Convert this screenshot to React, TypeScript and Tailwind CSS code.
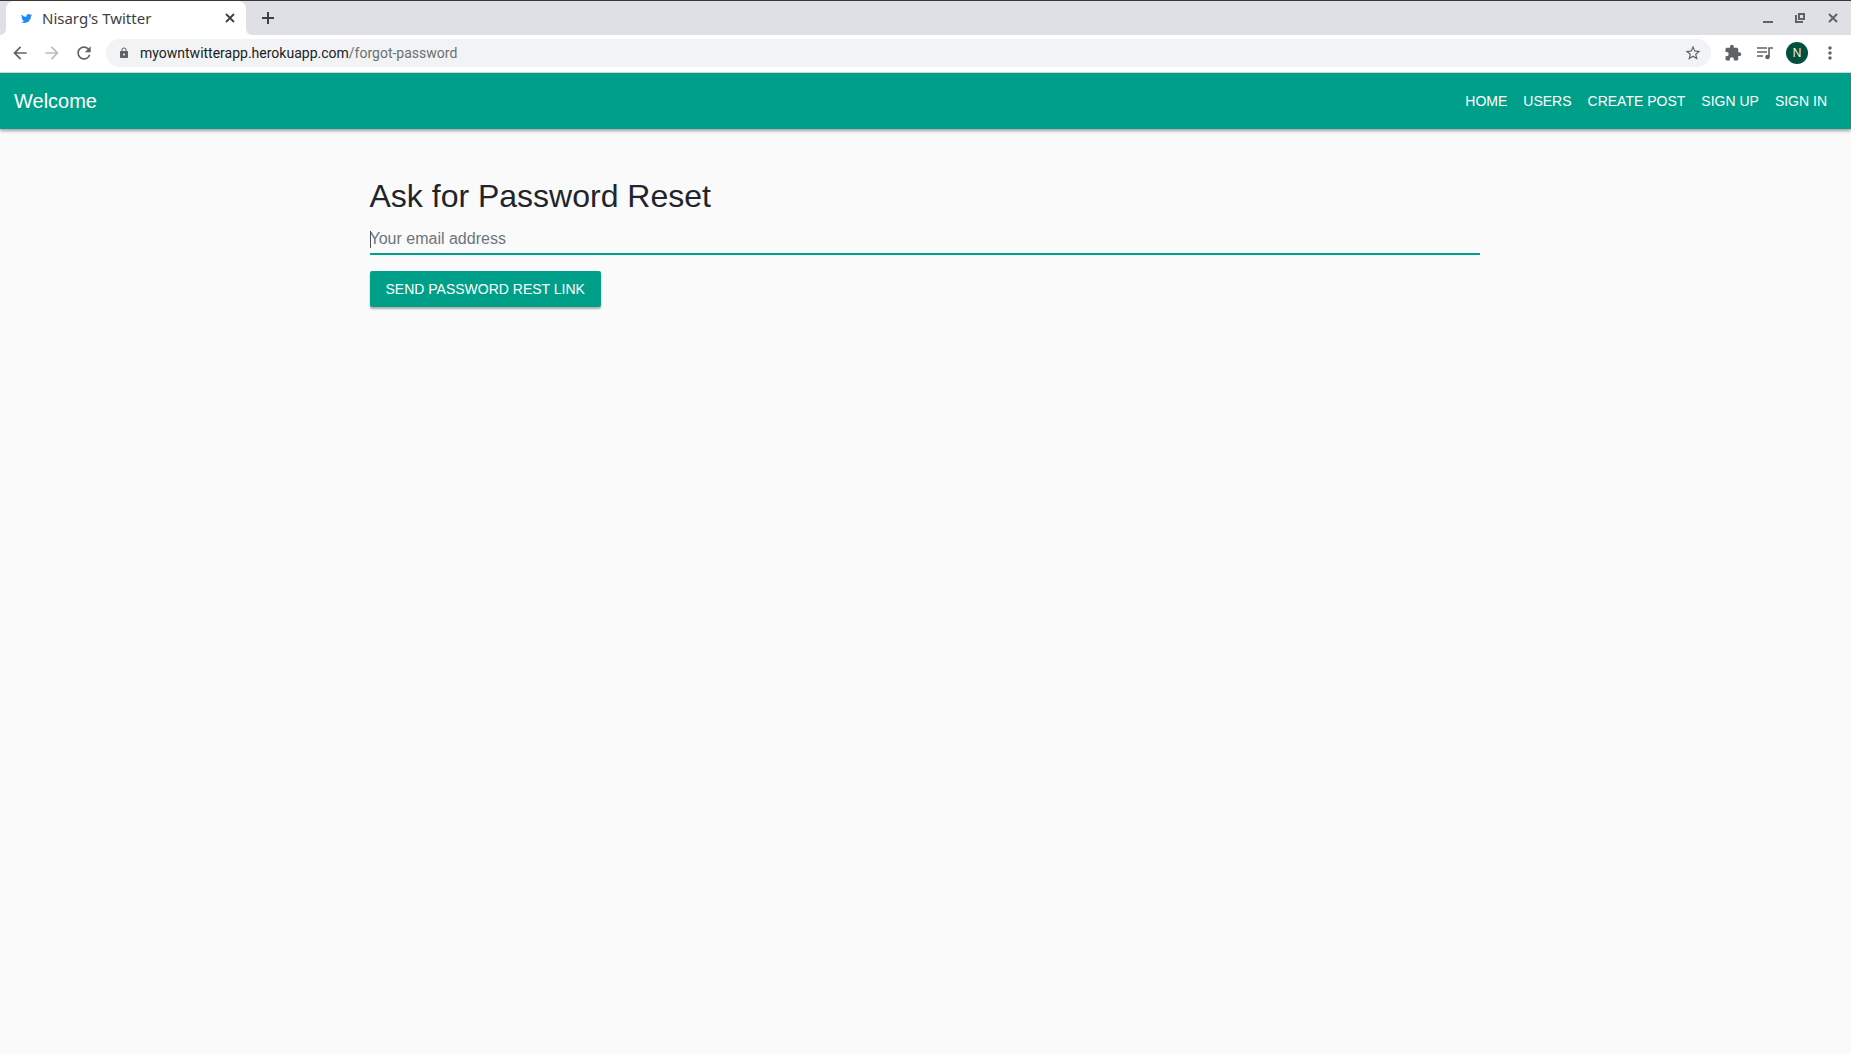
import {
  MdArrowBack,
  MdArrowForward,
  MdExtension,
  MdLock,
  MdMoreVert,
  MdRefresh,
  MdStarBorder,
} from "react-icons/md";
import { FaTwitter } from "react-icons/fa";

const links = [
  { label: "HOME", href: "#home" },
  { label: "USERS", href: "#users" },
  { label: "CREATE POST", href: "#create" },
  { label: "SIGN UP", href: "#signup" },
  { label: "SIGN IN", href: "#signin" },
];

function TabCurve({ flip = false }: { flip?: boolean }) {
  return (
    <svg viewBox="0 0 6 6" className={flip ? "size-1.5 -scale-x-100" : "size-1.5"} aria-hidden="true">
      <path d="M6 0v6H0a6 6 0 0 0 6-6z" fill="#fff" />
    </svg>
  );
}

function TabStrip() {
  return (
    <div className="flex h-[35px] items-end border-t border-[#3c3836] bg-[#dee0e5] text-[#3c4043]">
      <TabCurve />
      <div className="flex h-[34px] w-60 items-center rounded-t-lg bg-white pr-2 pl-[15px]">
        <FaTwitter className="size-[11px] text-[#1d8cf8]" aria-hidden="true" />
        <span className="ml-2.5 flex-1 font-['Noto_Sans',sans-serif] text-[15px] leading-5">Nisarg's Twitter</span>
        <button aria-label="Close tab">
          <svg viewBox="0 0 16 16" className="size-4" fill="none" stroke="currentColor" strokeWidth="1.8" aria-hidden="true">
            <path d="M4 4l8 8M12 4l-8 8" />
          </svg>
        </button>
      </div>
      <TabCurve flip />
      <button aria-label="New tab" className="ml-2 self-center">
        <svg viewBox="0 0 16 16" className="size-4" fill="none" stroke="currentColor" strokeWidth="2" aria-hidden="true">
          <path d="M8 2v12M2 8h12" />
        </svg>
      </button>
      <div className="mr-[10px] ml-auto flex items-center gap-4 self-center text-[#5f6368]">
        <button aria-label="Minimize">
          <svg viewBox="0 0 16 16" className="size-4" aria-hidden="true">
            <path d="M2 11h10v2H2z" fill="currentColor" />
          </svg>
        </button>
        <button aria-label="Restore">
          <svg viewBox="0 0 16 16" className="size-4" fill="none" stroke="currentColor" strokeWidth="2" aria-hidden="true">
            <path d="M6 4h5v5H6z" />
            <path d="M3 5v7h7" />
          </svg>
        </button>
        <button aria-label="Close window">
          <svg viewBox="0 0 16 16" className="size-4" fill="none" stroke="currentColor" strokeWidth="2" aria-hidden="true">
            <path d="M4 4l8 8M12 4l-8 8" />
          </svg>
        </button>
      </div>
    </div>
  );
}

function Toolbar() {
  return (
    <div className="flex h-[38px] items-center border-b border-[#d5d7da] bg-white pr-[11px] pb-px pl-[10px] text-[#5f6368]">
      <div className="flex items-center gap-3">
        <button aria-label="Back">
          <MdArrowBack className="size-5" />
        </button>
        <button aria-label="Forward" className="text-[#babcbe]">
          <MdArrowForward className="size-5" />
        </button>
        <button aria-label="Reload">
          <MdRefresh className="size-5" />
        </button>
      </div>
      <div className="ml-3 flex h-7 flex-1 items-center rounded-full bg-[#f1f3f4] pr-[9px] pl-3">
        <MdLock className="size-3" aria-hidden="true" />
        <p className="ml-2.5 flex-1 font-['Roboto',sans-serif] text-sm leading-5 text-[#202124]">
          myowntwitterapp.herokuapp.com<span className="text-[#6b6f73]">/forgot-password</span>
        </p>
        <button aria-label="Bookmark this page">
          <MdStarBorder className="size-[18px]" />
        </button>
      </div>
      <div className="ml-[13px] flex items-center gap-3">
        <button aria-label="Extensions">
          <MdExtension className="size-[18px]" />
        </button>
        <button aria-label="Media">
          <svg viewBox="0 0 20 20" className="size-5" fill="none" stroke="currentColor" strokeWidth="1.6" aria-hidden="true">
            <path d="M3 5h10M3 9h10M3 13h6M15 14V5h4" />
            <circle cx="13.5" cy="14" r="2.3" fill="currentColor" stroke="none" />
          </svg>
        </button>
        <button
          aria-label="Profile"
          className="flex size-[22px] items-center justify-center rounded-full bg-[#00523f] font-['Open_Sans',sans-serif] text-xs text-white"
        >
          N
        </button>
        <button aria-label="Menu">
          <MdMoreVert className="size-5" />
        </button>
      </div>
    </div>
  );
}

export default function App() {
  return (
    <div className="min-h-screen bg-[#fafafa] font-['Liberation_Sans',Arial,sans-serif] text-[#212529]">
      <TabStrip />
      <Toolbar />
      <nav className="flex h-14 items-center justify-between bg-[#009f89] pr-6 pl-3.5 text-white shadow-[0_2px_3px_rgba(0,0,0,0.35)]">
        <a href="#home" className="text-xl">
          Welcome
        </a>
        <ul className="flex gap-4 text-sm">
          {links.map((link) => (
            <li key={link.label}>
              <a href={link.href}>{link.label}</a>
            </li>
          ))}
        </ul>
      </nav>
      <main className="mx-auto max-w-[1140px] pt-12 pr-4 pl-3.5">
        <h1 className="text-[32px] leading-[38px]">Ask for Password Reset</h1>
        <form onSubmit={(e) => e.preventDefault()}>
          <div className="relative mt-2">
            <input
              type="email"
              aria-label="Your email address"
              placeholder="Your email address"
              autoFocus
              className="block h-8 w-full border-b-2 border-[#009f89] bg-transparent pt-0.5 text-base caret-transparent outline-none placeholder:text-[#6c757d]"
            />
            <span className="absolute top-2 left-0 h-[17px] w-px bg-[#495057]" aria-hidden="true" />
          </div>
          <button
            type="submit"
            className="mt-4 h-9 rounded-xs bg-[#009f89] px-4 text-sm text-white shadow-[0_2px_2px_rgba(0,0,0,0.3)]"
          >
            SEND PASSWORD REST LINK
          </button>
        </form>
      </main>
    </div>
  );
}
